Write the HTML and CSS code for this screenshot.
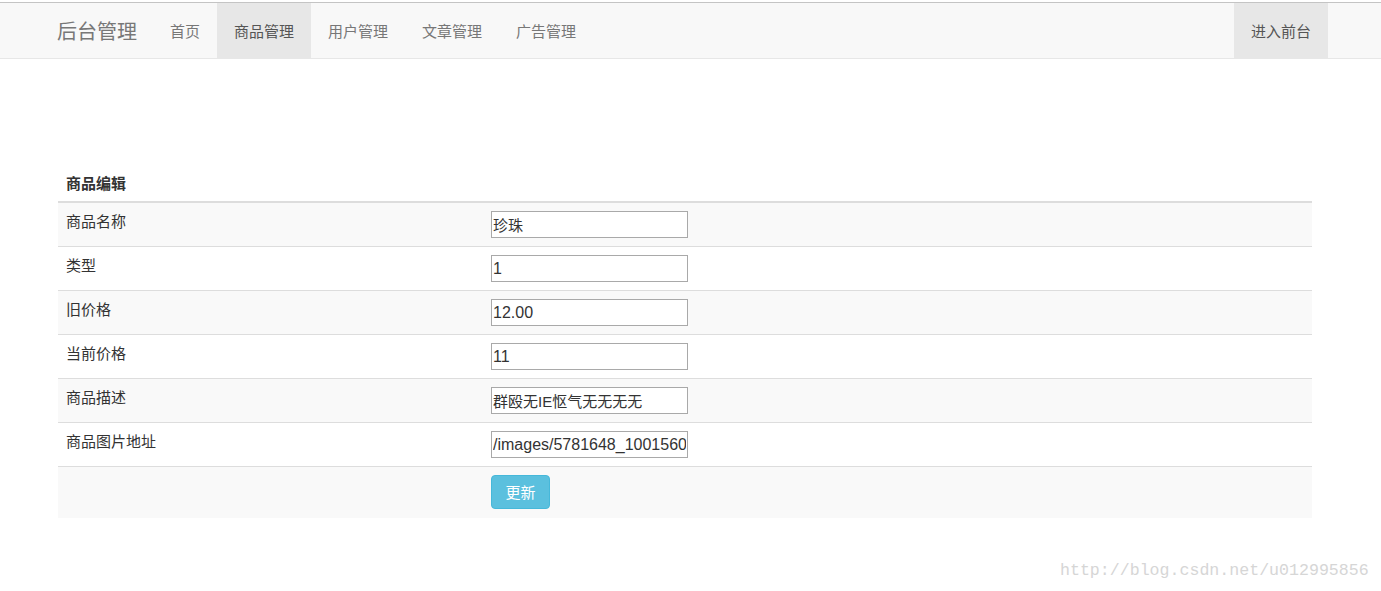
FILE: index.html
```html
<!DOCTYPE html>
<html lang="zh-CN">
<head>
<meta charset="utf-8">
<title>后台管理</title>
<link rel="stylesheet" href="styles.css">
</head>
<body>
<nav class="navbar">
  <a class="brand">后台管理</a>
  <ul class="nav">
    <li><a>首页</a></li>
    <li class="active"><a>商品管理</a></li>
    <li><a>用户管理</a></li>
    <li><a>文章管理</a></li>
    <li><a>广告管理</a></li>
  </ul>
  <ul class="nav nav-right">
    <li class="active"><a>进入前台</a></li>
  </ul>
</nav>
<main class="content">
  <table class="table">
    <thead>
      <tr><th colspan="2">商品编辑</th></tr>
    </thead>
    <tbody>
      <tr><td class="label">商品名称</td><td><input class="field field-cjk" type="text" value="珍珠"></td></tr>
      <tr><td class="label">类型</td><td><input class="field" type="text" value="1"></td></tr>
      <tr><td class="label">旧价格</td><td><input class="field" type="text" value="12.00"></td></tr>
      <tr><td class="label">当前价格</td><td><input class="field" type="text" value="11"></td></tr>
      <tr><td class="label">商品描述</td><td><input class="field field-cjk" type="text" value="群殴无IE怄气无无无无"></td></tr>
      <tr><td class="label">商品图片地址</td><td><input class="field" type="text" value="/images/5781648_1001560"></td></tr>
      <tr><td class="label"></td><td><button class="btn">更新</button></td></tr>
    </tbody>
  </table>
</main>
<div class="watermark">http://blog.csdn.net/u012995856</div>
</body>
</html>
```
FILE: styles.css
```css
html, body {
  margin: 0;
  padding: 0;
  background: #fff;
}
body {
  font-family: "Noto Sans CJK SC", "Liberation Sans", sans-serif;
  font-size: 15px;
  color: #333;
  padding-top: 2px;
  position: relative;
  min-height: 589px;
}
.navbar {
  display: flex;
  align-items: stretch;
  height: 55px;
  background: #f8f8f8;
  border-top: 1px solid #c4c4c4;
  border-bottom: 1px solid #e7e7e7;
  padding-left: 57px;
  padding-right: 53px;
}
.brand {
  display: flex;
  align-items: center;
  font-size: 20px;
  color: #777;
  padding-right: 16px;
  line-height: 20px;
}
.nav {
  list-style: none;
  margin: 0;
  padding: 0;
  display: flex;
}
.nav li {
  display: flex;
}
.nav a {
  display: flex;
  align-items: center;
  padding: 0 17px;
  color: #777;
  font-size: 15px;
  line-height: 20px;
}
.nav li.active a {
  background: #e7e7e7;
  color: #555;
}
.nav-right {
  margin-left: auto;
}
.content {
  padding: 106px 69px 0 58px;
}
.table {
  width: 100%;
  border-collapse: collapse;
  border-spacing: 0;
}
.table th {
  text-align: left;
  font-weight: bold;
  padding: 8px;
  line-height: 20px;
  border-bottom: 2px solid #ddd;
  color: #333;
}
.table td {
  padding: 8px;
  line-height: 20px;
  vertical-align: top;
  border-top: 1px solid #ddd;
}
.table thead + tbody tr:first-child td {
  border-top: 0;
}
.table tbody tr:nth-child(odd) {
  background: #f9f9f9;
}
.table tbody tr:last-child td {
  padding-bottom: 9px;
}
.table td.label {
  width: 409px;
}
.field {
  display: block;
  box-sizing: border-box;
  width: 197px;
  height: 27px;
  margin: 0;
  padding: 0 1px;
  border: 1px solid #a9a9a9;
  background: #fff;
  font-family: "Liberation Sans", "Noto Sans CJK SC", sans-serif;
  font-size: 16px;
  color: #333;
  overflow: hidden;
}
.field-cjk {
  font-size: 15px;
}
.btn {
  display: block;
  box-sizing: border-box;
  width: 59px;
  height: 34px;
  margin: 0;
  padding: 0;
  background: #5bc0de;
  border: 1px solid #46b8da;
  border-radius: 4px;
  color: #fff;
  font-family: "Noto Sans CJK SC", sans-serif;
  font-size: 15px;
  line-height: 20px;
}
.watermark {
  position: absolute;
  left: 1060px;
  top: 561px;
  font-family: "Liberation Mono", "DejaVu Sans Mono", monospace;
  font-size: 16.6px;
  color: #d6d6d6;
  line-height: 20px;
  white-space: nowrap;
}
```
